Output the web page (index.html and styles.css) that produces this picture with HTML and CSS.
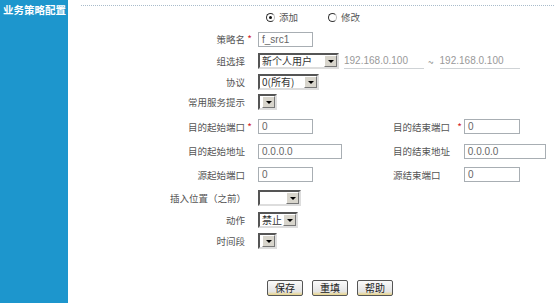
FILE: index.html
```html
<!DOCTYPE html>
<html>
<head>
    <meta charset="UTF-8">
    <title>业务策略配置</title>
    <link rel="stylesheet" href="styles.css">
</head>
<body>
<div class="container">
    <div class="sidebar">
        <div class="side-title">业务策略配置</div>
    </div>
    <div class="main">
        <div class="rule"></div>
        <div class="form">
            <div class="lbl"></div>
            <div class="field radios">
                <span class="radio on"></span><span class="rtext">添加</span>
                <span class="radio"></span><span class="rtext">修改</span>
            </div>
            <div class="lbl2"></div><div class="field2"></div>

            <div class="lbl">策略名<span class="star">*</span></div>
            <div class="field"><span class="inp w55">f_src1</span></div>
            <div class="lbl2"></div><div class="field2"></div>

            <div class="lbl">组选择<span class="star"></span></div>
            <div class="field wide">
                <span class="sel w80"><span class="val">新个人用户</span><span class="arrow"></span></span>
                <span class="ip">192.168.0.100</span>
                <span class="tilde">~</span>
                <span class="ip">192.168.0.100</span>
            </div>

            <div class="lbl">协议<span class="star"></span></div>
            <div class="field"><span class="sel w60"><span class="val">0(所有)</span><span class="arrow"></span></span></div>
            <div class="lbl2"></div><div class="field2"></div>

            <div class="lbl">常用服务提示<span class="star"></span></div>
            <div class="field"><span class="sel w19"><span class="val"></span><span class="arrow"></span></span></div>
            <div class="lbl2"></div><div class="field2"></div>

            <div class="lbl">目的起始端口<span class="star">*</span></div>
            <div class="field"><span class="inp w55">0</span></div>
            <div class="lbl2">目的结束端口</div>
            <div class="field2"><span class="star">*</span><span class="inp w56">0</span></div>

            <div class="lbl">目的起始地址<span class="star"></span></div>
            <div class="field"><span class="inp w84">0.0.0.0</span></div>
            <div class="lbl2">目的结束地址</div>
            <div class="field2"><span class="star"></span><span class="inp w84">0.0.0.0</span></div>

            <div class="lbl">源起始端口<span class="star"></span></div>
            <div class="field"><span class="inp w55">0</span></div>
            <div class="lbl2">源结束端口</div>
            <div class="field2"><span class="star"></span><span class="inp w56">0</span></div>

            <div class="lbl">插入位置（之前）<span class="star"></span></div>
            <div class="field"><span class="sel w42"><span class="val"></span><span class="arrow"></span></span></div>
            <div class="lbl2"></div><div class="field2"></div>

            <div class="lbl">动作<span class="star"></span></div>
            <div class="field"><span class="sel w39"><span class="val">禁止</span><span class="arrow"></span></span></div>
            <div class="lbl2"></div><div class="field2"></div>

            <div class="lbl">时间段<span class="star"></span></div>
            <div class="field"><span class="sel w19"><span class="val"></span><span class="arrow"></span></span></div>
            <div class="lbl2"></div><div class="field2"></div>
        </div>
        <div class="buttons">
            <button>保存</button>
            <button>重填</button>
            <button>帮助</button>
        </div>
    </div>
</div>
</body>
</html>
```
FILE: styles.css
```css
body {
    margin: 0;
    padding: 0;
    background-color: #fff;
    color: #555;
    font-family: "Noto Sans CJK SC", "Liberation Sans", sans-serif;
    font-size: 9.5px;
}

.container {
    display: flex;
    height: 303px;
}

.sidebar {
    width: 68px;
    background-color: #1d96cd;
    flex-shrink: 0;
}

.side-title {
    color: #fff;
    font-weight: bold;
    font-size: 10.5px;
    line-height: 12px;
    padding: 4px 0 0 3px;
    white-space: nowrap;
}

.main {
    flex: 1;
    padding-left: 13px;
}

.rule {
    margin-top: 5px;
    border-top: 1px dotted #a9bccb;
}

.form {
    display: grid;
    margin-left: 89px;
    grid-template-columns: 88px 135px 61px 92px;
    grid-template-rows: 22px 22px 22px 19px 22px 27px 22px 25px 22px 22px 20px;
    align-items: center;
}

.lbl {
    white-space: nowrap;
    display: flex;
    justify-content: flex-end;
    align-items: center;
}

.lbl2 {
    white-space: nowrap;
}

.star {
    display: inline-block;
    width: 9px;
    color: #d2232a;
    font-size: 10px;
    text-align: center;
    line-height: 10px;
}

.lbl .star {
    margin-right: 4px;
}

.field {
    display: flex;
    align-items: center;
}

.field.wide {
    grid-column: 2 / 5;
}

.field2 {
    display: flex;
    align-items: center;
    margin-left: 1px;
}

.radios {
    padding-left: 8px;
}

.radio {
    display: inline-block;
    width: 7px;
    height: 7px;
    border: 1px solid #333;
    border-right-color: #bbb;
    border-radius: 50%;
    position: relative;
    margin-right: 4px;
}

.radio.on::after {
    content: "";
    position: absolute;
    left: 2px;
    top: 2px;
    width: 3px;
    height: 3px;
    border-radius: 50%;
    background: #111;
}

.rtext {
    margin-right: 30px;
    line-height: 14px;
}

.inp {
    display: inline-block;
    box-sizing: border-box;
    height: 15px;
    border: 1px solid #a8aeb3;
    font-size: 10px;
    line-height: 13px;
    padding-left: 3px;
    color: #666;
    font-family: "Liberation Sans", sans-serif;
    background: #fff;
}

.w55 { width: 55px; }
.w56 { width: 56px; }
.w84 { width: 84px; }

.sel {
    display: inline-flex;
    box-sizing: border-box;
    height: 16px;
    border: 2px solid;
    border-color: #555 #ddd #ddd #555;
    align-items: center;
    background: #fff;
}

.w80 { width: 81px; }
.w60 { width: 61px; }
.w42 { width: 43px; }
.w39 { width: 40px; }
.w19 { width: 19px; }

.sel .val {
    flex: 1;
    font-size: 10px;
    line-height: 12px;
    padding-left: 2px;
    white-space: nowrap;
    color: #333;
}

.sel .arrow {
    width: 13px;
    height: 12px;
    box-sizing: border-box;
    background: #d8d5cc;
    border: 1px solid;
    border-color: #fff #777 #777 #fff;
    position: relative;
    flex-shrink: 0;
}

.sel .arrow::after {
    content: "";
    position: absolute;
    left: 3px;
    top: 4px;
    border-left: 3px solid transparent;
    border-right: 3px solid transparent;
    border-top: 3px solid #000;
}

.ip {
    display: inline-block;
    width: 80px;
    margin-left: 5px;
    border-bottom: 1px solid #cfd3d6;
    color: #999;
    font-size: 10px;
    font-family: "Liberation Sans", sans-serif;
    line-height: 14px;
}

.tilde {
    color: #888;
    margin: 0 1px 0 4px;
    font-size: 10px;
}

.buttons {
    display: flex;
    gap: 9px;
    margin: 29px 0 0 186px;
}

.buttons button {
    width: 36px;
    height: 16px;
    padding: 0;
    font-size: 10px;
    line-height: 12px;
    font-family: "Noto Sans CJK SC", sans-serif;
    color: #222;
    border: 1px solid #555;
    border-radius: 2px;
    background: linear-gradient(#fafafa, #e4e4e4 75%, #e8d48a);
}
```
